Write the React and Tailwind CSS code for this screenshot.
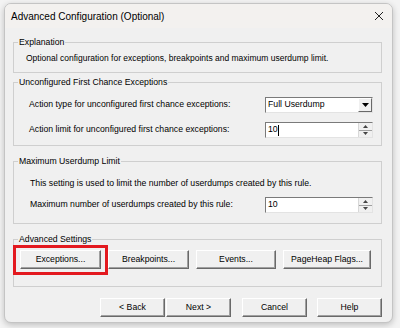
import React from 'react';

const font = { fontFamily: '"Liberation Sans", Arial, sans-serif' };

const Btn = ({ children, className = '' }) => (
  <div
    className={`h-[19px] flex items-center justify-center bg-[#f0f0f0] border border-t-white border-l-white border-b-[#696969] border-r-[#696969] shadow-[inset_-1px_-1px_0_#a0a0a0] text-[8.7px] text-black ${className}`}
  >
    {children}
  </div>
);

const Edit = ({ children, caret = false, combo = false }) => (
  <div className="w-[108px] h-[16px] flex bg-white border border-t-[#7a7a7a] border-l-[#7a7a7a] border-b-[#e3e3e3] border-r-[#e3e3e3]">
    <div className="flex-1 flex items-center pl-[2px] text-[8.7px] text-black">
      {children}
      {caret && <span className="w-px h-[11px] bg-black" />}
    </div>
    {combo ? (
      <div className="w-[14px] h-full flex items-center justify-center bg-[#f0f0f0] border border-t-white border-l-white border-b-[#696969] border-r-[#696969]">
        <svg width="7" height="4" viewBox="0 0 7 4">
          <path d="M0 0h7L3.5 4z" fill="#000" />
        </svg>
      </div>
    ) : (
      <div className="w-[14px] h-full flex flex-col bg-[#f0f0f0] border-l border-[#d8d8d8]">
        <div className="flex-1 flex items-center justify-center border-b border-[#a0a0a0]">
          <svg width="5" height="3" viewBox="0 0 5 3">
            <path d="M2.5 0L5 3H0z" fill="#444" />
          </svg>
        </div>
        <div className="flex-1 flex items-center justify-center">
          <svg width="5" height="3" viewBox="0 0 5 3">
            <path d="M0 0h5L2.5 3z" fill="#444" />
          </svg>
        </div>
      </div>
    )}
  </div>
);

const Group = ({ title, className = '', children }) => (
  <fieldset className={`mx-0 border border-[#cfcfcf] p-0 min-w-0 ${className}`}>
    <legend className="ml-[4px] px-[1px] text-[8.7px] leading-[12px] text-black">{title}</legend>
    {children}
  </fieldset>
);

export default function App() {
  return (
    <div className="w-[400px] h-[328px] bg-[#f3f3f3] pt-[3px] pl-[4px]" style={font}>
      <div className="w-[389px] h-[320px] flex flex-col rounded-[7px] border border-[#c4c4c4] bg-[#f0f0f0] shadow-[0_2px_6px_rgba(0,0,0,0.22)] overflow-hidden">
        <div className="h-[24px] shrink-0 flex items-center justify-between pl-[6px] pr-[8px] bg-[#f3f1ef]">
          <span className="text-[10px] text-black">Advanced Configuration (Optional)</span>
          <svg width="10" height="10" viewBox="0 0 10 10">
            <path d="M1 1l8 8M9 1l-8 8" stroke="#222" strokeWidth="1" />
          </svg>
        </div>

        <div className="flex flex-col pl-[8px] pr-[10px]">
          <Group title="Explanation" className="mt-[8px] h-[37px]">
            <div className="pt-[4px] pl-[12px] text-[8.5px] leading-[12px] text-black">
              Optional configuration for exceptions, breakpoints and maximum userdump limit.
            </div>
          </Group>

          <Group title="Unconfigured First Chance Exceptions" className="mt-[3px] h-[70px]">
            <div className="pt-[9px] pl-[15px] pr-[8px] flex flex-col gap-[9px]">
              <div className="h-[16px] flex items-center justify-between">
                <span className="text-[8.7px] text-black">Action type for unconfigured first chance exceptions:</span>
                <Edit combo>Full Userdump</Edit>
              </div>
              <div className="h-[16px] flex items-center justify-between">
                <span className="text-[8.7px] text-black">Action limit for unconfigured first chance exceptions:</span>
                <Edit caret>10</Edit>
              </div>
            </div>
          </Group>

          <Group title="Maximum Userdump Limit" className="mt-[9px] h-[69px]">
            <div className="pt-[10px] pl-[16px] pr-[8px] flex flex-col">
              <div className="text-[8.7px] leading-[12px] text-black">
                This setting is used to limit the number of userdumps created by this rule.
              </div>
              <div className="mt-[8px] h-[16px] flex items-center justify-between">
                <span className="text-[8.7px] text-black">Maximum number of userdumps created by this rule:</span>
                <Edit>10</Edit>
              </div>
            </div>
          </Group>

          <Group title="Advanced Settings" className="mt-[9px] h-[54px]">
            <div className="relative pt-[5px] pl-[6px] flex gap-[7px]">
              <Btn className="w-[81px]">Exceptions...</Btn>
              <Btn className="w-[81px]">Breakpoints...</Btn>
              <Btn className="w-[80px]">Events...</Btn>
              <Btn className="w-[88px]">PageHeap Flags...</Btn>
              <div className="absolute left-[-1px] top-0 w-[95px] h-[30px] border-[3px] border-[#e3191f]" />
            </div>
          </Group>

          <div className="mt-[11px] flex justify-end">
            <Btn className="w-[65px]">&lt; Back</Btn>
            <Btn className="w-[65px] ml-[1px]">Next &gt;</Btn>
            <Btn className="w-[65px] ml-[11px]">Cancel</Btn>
            <Btn className="w-[65px] ml-[10px]">Help</Btn>
          </div>
        </div>
      </div>
    </div>
  );
}
